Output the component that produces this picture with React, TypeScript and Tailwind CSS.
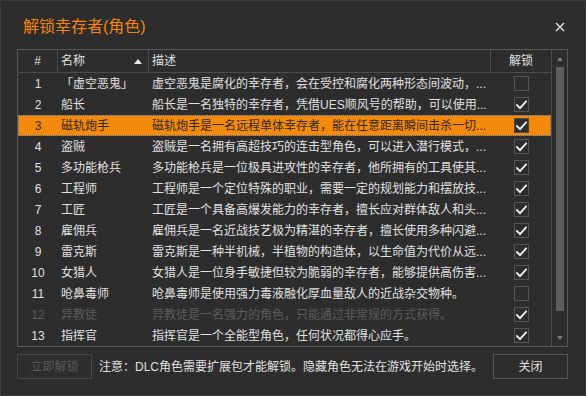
import React from "react";

type Row = { n: number; name: string; desc: string; checked: boolean; disabled?: boolean; selected?: boolean };

const rows: Row[] = [
  { n: 1, name: "「虚空恶鬼」", desc: "虚空恶鬼是腐化的幸存者，会在受控和腐化两种形态间波动，...", checked: false },
  { n: 2, name: "船长", desc: "船长是一名独特的幸存者，凭借UES顺风号的帮助，可以使用...", checked: true },
  { n: 3, name: "磁轨炮手", desc: "磁轨炮手是一名远程单体幸存者，能在任意距离瞬间击杀一切...", checked: true, selected: true },
  { n: 4, name: "盗贼", desc: "盗贼是一名拥有高超技巧的连击型角色，可以进入潜行模式，...", checked: true },
  { n: 5, name: "多功能枪兵", desc: "多功能枪兵是一位极具进攻性的幸存者，他所拥有的工具使其...", checked: true },
  { n: 6, name: "工程师", desc: "工程师是一个定位特殊的职业，需要一定的规划能力和摆放技...", checked: true },
  { n: 7, name: "工匠", desc: "工匠是一个具备高爆发能力的幸存者，擅长应对群体敌人和头...", checked: true },
  { n: 8, name: "雇佣兵", desc: "雇佣兵是一名近战技艺极为精湛的幸存者，擅长使用多种闪避...", checked: true },
  { n: 9, name: "雷克斯", desc: "雷克斯是一种半机械，半植物的构造体，以生命值为代价从远...", checked: true },
  { n: 10, name: "女猎人", desc: "女猎人是一位身手敏捷但较为脆弱的幸存者，能够提供高伤害...", checked: true },
  { n: 11, name: "呛鼻毒师", desc: "呛鼻毒师是使用强力毒液融化厚血量敌人的近战杂交物种。", checked: false },
  { n: 12, name: "异教徒", desc: "异教徒是一名强力的角色，只能通过非常规的方式获得。", checked: true, disabled: true },
  { n: 13, name: "指挥官", desc: "指挥官是一个全能型角色，任何状况都得心应手。", checked: true },
];

function Check({ checked, selected }: { checked: boolean; selected?: boolean }) {
  return (
    <div
      className={
        "w-[15px] h-[15px] border flex items-center justify-center " +
        (selected ? "border-[#4a4a4a] bg-[#2f2f2f]" : "border-[#555555] bg-[#2d2d2d]")
      }
    >
      {checked && (
        <svg width="11" height="10" viewBox="0 0 11 10">
          <path d="M1 5.2 L4 8.2 L10 1.5" fill="none" stroke="#f2f2f2" strokeWidth="1.9" strokeLinecap="square" />
        </svg>
      )}
    </div>
  );
}

export default function App() {
  return (
    <div
      className="w-[586px] h-[396px] bg-[#2d2d2d] border border-[#3b3b3b] flex flex-col pl-[16px] pr-[17px] text-[12px] text-[#e0e0e0]"
      style={{ fontFamily: '"Liberation Sans", "Noto Sans CJK SC", sans-serif' }}
    >
      {/* title */}
      <div className="h-[48px] flex items-center pt-[4px] pl-[6px] pr-[3px]">
        <div className="text-[16px] text-[#f5840c] leading-none flex-1">解锁幸存者(角色)</div>
        <svg width="10" height="10" viewBox="0 0 10 10">
          <path d="M1 1 L9 9 M9 1 L1 9" stroke="#d4d4d4" strokeWidth="1.7" />
        </svg>
      </div>

      {/* table */}
      <div className="border border-[#585858] flex h-[298px]">
        <div className="w-[533px] flex flex-col">
          <div className="h-[23px] flex border-b border-[#4c4c4c]">
            <div className="w-[40px] border-r border-[#4c4c4c] flex items-center justify-center">#</div>
            <div className="w-[91px] border-r border-[#4c4c4c] flex items-center pl-[3px] pr-[6px]">
              <span className="flex-1">名称</span>
              <svg width="8" height="5" viewBox="0 0 8 5">
                <path d="M0 5 L4 0 L8 5 Z" fill="#e8e8e8" />
              </svg>
            </div>
            <div className="w-[342px] border-r border-[#4c4c4c] flex items-center pl-[3px]">描述</div>
            <div className="w-[60px] flex items-center justify-center">解锁</div>
          </div>
          {rows.map((r) => (
            <div
              key={r.n}
              className={
                "h-[21px] flex items-center " +
                (r.selected
                  ? "bg-[#f5890c] text-[#2e2a24] outline-1 outline-dotted outline-[#3d6fae] -outline-offset-1"
                  : r.disabled
                  ? "text-[#5c5c5c]"
                  : "")
              }
            >
              <div className="w-[40px] text-center">{r.n}</div>
              <div className="w-[91px] pl-[3px] whitespace-nowrap">{r.name}</div>
              <div className="w-[342px] pl-[3px] pr-[4px] whitespace-nowrap overflow-hidden">{r.desc}</div>
              <div className="w-[60px] flex items-center justify-center pl-[1px]">
                <Check checked={r.checked} selected={r.selected} />
              </div>
            </div>
          ))}
        </div>
        <div className="w-[17px] border-l border-[#4c4c4c] flex flex-col items-center">
          <div className="h-[17px] flex items-center justify-center">
            <svg width="6" height="4" viewBox="0 0 6 4">
              <path d="M0 4 L3 0 L6 4 Z" fill="#7a7a7a" />
            </svg>
          </div>
          <div className="w-[8px] h-[244px] bg-[#5e5e5e]" />
          <div className="flex-1" />
          <div className="h-[17px] flex items-center justify-center">
            <svg width="6" height="4" viewBox="0 0 6 4">
              <path d="M0 0 L3 4 L6 0 Z" fill="#7a7a7a" />
            </svg>
          </div>
        </div>
      </div>

      {/* footer */}
      <div className="mt-[7px] flex items-center">
        <div className="w-[75px] h-[25px] border border-[#474747] flex items-center justify-center text-[#585858]">
          立即解锁
        </div>
        <div className="flex-1 pl-[7px] whitespace-nowrap">注意：DLC角色需要扩展包才能解锁。隐藏角色无法在游戏开始时选择。</div>
        <div className="w-[75px] h-[25px] border border-[#555555] flex items-center justify-center">关闭</div>
      </div>
    </div>
  );
}
